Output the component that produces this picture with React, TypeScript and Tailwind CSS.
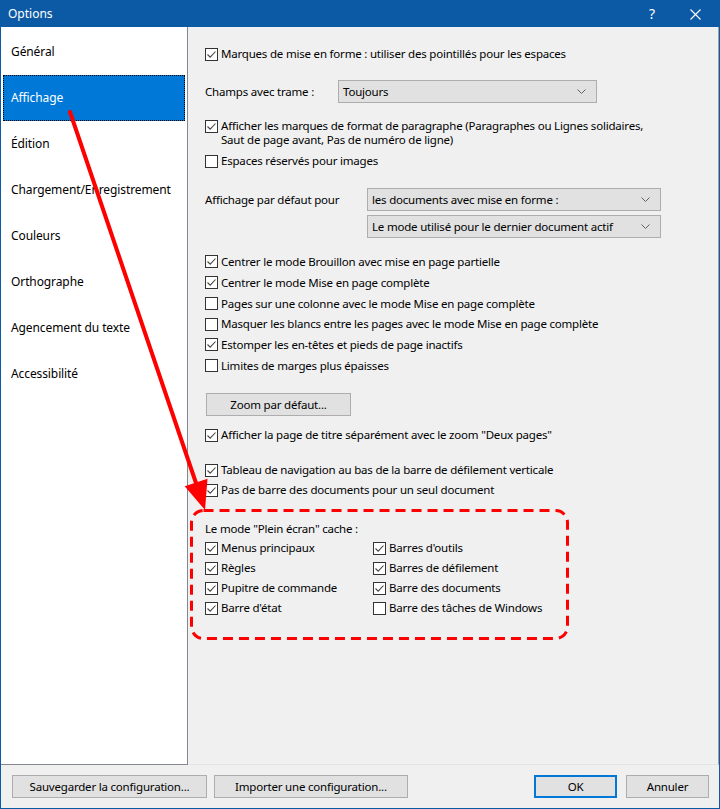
import React from "react";

const FONT = { fontFamily: '"Noto Sans", "Open Sans", sans-serif' };

function Check({ checked }: { checked: boolean }) {
  return (
    <span className="w-[13px] h-[13px] shrink-0 border border-[#333333] bg-white flex items-center justify-center">
      {checked && (
        <svg width="11" height="11" viewBox="0 0 11 11">
          <path d="M1.5 5.5 L4.2 8.2 L9.5 2.5" fill="none" stroke="#444" strokeWidth="1.1" />
        </svg>
      )}
    </span>
  );
}

function CheckRow({ checked, label, h = "h-[20px]", cls = "" }: { checked: boolean; label: string; h?: string; cls?: string }) {
  return (
    <div className={`flex items-center gap-[3px] ${h} ${cls}`}>
      <Check checked={checked} />
      <span className="whitespace-nowrap">{label}</span>
    </div>
  );
}

function Select({ value, w }: { value: string; w: string }) {
  return (
    <div className={`${w} h-[23px] bg-[#e1e1e1] border border-[#adadad] flex items-center justify-between pl-[4px] pr-[10px]`}>
      <span className="whitespace-nowrap">{value}</span>
      <svg width="9" height="5" viewBox="0 0 9 5">
        <path d="M0.5 0.5 L4.5 4.5 L8.5 0.5" fill="none" stroke="#606060" strokeWidth="1" />
      </svg>
    </div>
  );
}

function Btn({ label, w, primary = false }: { label: string; w: string; primary?: boolean }) {
  return (
    <div
      className={`${w} h-[23px] bg-[#e1e1e1] flex items-center justify-center ${
        primary ? "border-2 border-[#0078d7]" : "border border-[#adadad]"
      }`}
    >
      {label}
    </div>
  );
}

const menu = [
  "Général",
  "Affichage",
  "Édition",
  "Chargement/Enregistrement",
  "Couleurs",
  "Orthographe",
  "Agencement du texte",
  "Accessibilité",
];

export default function App() {
  return (
    <div
      style={FONT}
      className="relative w-[720px] h-[809px] border border-[#0c5aa6] bg-[#f0f0f0] flex flex-col text-[11.5px] tracking-[-0.2px] text-black leading-none overflow-hidden"
    >
      {/* Title bar */}
      <div className="h-[26px] shrink-0 bg-[#0c5aa6] flex items-center text-white">
        <span className="pl-[7px] text-[12px] tracking-normal">Options</span>
        <span className="ml-auto mr-[35px] text-[14px]">?</span>
        <svg width="11" height="11" viewBox="0 0 11 11" className="mr-[18px]">
          <path d="M0.5 0.5 L10.5 10.5 M10.5 0.5 L0.5 10.5" stroke="white" strokeWidth="1.1" />
        </svg>
      </div>

      {/* Main area */}
      <div className="flex h-[738px] shrink-0">
        {/* Left list */}
        <div className="w-[187px] shrink-0 bg-white border-r border-b border-[#828790] pt-[2px] flex flex-col text-[12px] tracking-[-0.1px]">
          {menu.map((m, i) =>
            i === 1 ? (
              <div
                key={m}
                className="mx-[2px] h-[46px] shrink-0 bg-[#0078d7] border border-dotted border-black text-white flex items-center pl-[7px]"
              >
                {m}
              </div>
            ) : (
              <div key={m} className="mx-[2px] h-[46px] shrink-0 flex items-center pl-[8px]">
                {m}
              </div>
            )
          )}
        </div>

        {/* Right panel */}
        <div className="flex-1 border-r border-r-[#a0a0a0] border-b border-b-[#e3e3e3] pt-[17px] pl-[17px] flex flex-col">
          <CheckRow checked label="Marques de mise en forme : utiliser des pointillés pour les espaces" />

          <div className="mt-[16px] flex items-center">
            <span className="w-[133px] whitespace-nowrap">Champs avec trame :</span>
            <Select value="Toujours" w="w-[259px]" />
          </div>

          <div className="mt-[16px] flex items-start gap-[3px]">
            <div className="pt-[1px]">
              <Check checked />
            </div>
            <span className="leading-[14px]">
              Afficher les marques de format de paragraphe (Paragraphes ou Lignes solidaires,
              <br />
              Saut de page avant, Pas de numéro de ligne)
            </span>
          </div>

          <CheckRow checked={false} label="Espaces réservés pour images" cls="mt-[4px]" />

          <div className="mt-[17px] flex">
            <div className="w-[162px] h-[23px] flex items-center whitespace-nowrap">Affichage par défaut pour</div>
            <div className="flex flex-col gap-[4px]">
              <Select value="les documents avec mise en forme :" w="w-[294px]" />
              <Select value="Le mode utilisé pour le dernier document actif" w="w-[294px]" />
            </div>
          </div>

          <div className="mt-[13px] flex flex-col">
            <CheckRow h="h-[21px]" checked label="Centrer le mode Brouillon avec mise en page partielle" />
            <CheckRow h="h-[21px]" checked label="Centrer le mode Mise en page complète" />
            <CheckRow h="h-[21px]" checked={false} label="Pages sur une colonne avec le mode Mise en page complète" />
            <CheckRow
              h="h-[20px]"
              checked={false}
              label="Masquer les blancs entre les pages avec le mode Mise en page complète"
            />
            <CheckRow h="h-[21px]" checked label="Estomper les en-têtes et pieds de page inactifs" />
            <CheckRow h="h-[21px]" checked={false} label="Limites de marges plus épaisses" />
          </div>

          <div className="mt-[17px] ml-[1px]">
            <Btn label="Zoom par défaut..." w="w-[145px]" />
          </div>

          <CheckRow checked cls="mt-[9px]" label='Afficher la page de titre séparément avec le zoom "Deux pages"' />

          <CheckRow checked cls="mt-[15px]" label="Tableau de navigation au bas de la barre de défilement verticale" />
          <CheckRow checked label="Pas de barre des documents pour un seul document" />

          <div className="mt-[20px] h-[18px] flex items-center">Le mode "Plein écran" cache :</div>
          <div className="grid grid-cols-[168px_1fr]">
            <CheckRow checked label="Menus principaux" />
            <CheckRow checked label="Barres d'outils" />
            <CheckRow checked label="Règles" />
            <CheckRow checked label="Barres de défilement" />
            <CheckRow checked label="Pupitre de commande" />
            <CheckRow checked label="Barre des documents" />
            <CheckRow checked label="Barre d'état" />
            <CheckRow checked={false} label="Barre des tâches de Windows" />
          </div>
        </div>
      </div>

      {/* Footer */}
      <div className="flex-1 flex items-center pl-[11px] pr-[10px]">
        <Btn label="Sauvegarder la configuration..." w="w-[195px]" />
        <div className="w-[7px]" />
        <Btn label="Importer une configuration..." w="w-[194px]" />
        <div className="flex-1" />
        <Btn label="OK" w="w-[83px]" primary />
        <div className="w-[9px]" />
        <Btn label="Annuler" w="w-[83px]" />
      </div>

      {/* Annotation overlay */}
      <svg className="absolute left-[-1px] top-[-1px] pointer-events-none" width="720" height="809" viewBox="0 0 720 809">
        <rect
          x="191.5"
          y="510.5"
          width="376"
          height="128"
          rx="12"
          fill="none"
          stroke="#ff0000"
          strokeWidth="3"
          strokeDasharray="10 6"
        />
        <line x1="70" y1="112" x2="196" y2="483" stroke="#ff0000" strokeWidth="4" strokeLinecap="round" />
        <polygon points="205,510 184.7,486.3 207.5,478.7" fill="#ff0000" />
      </svg>
    </div>
  );
}
